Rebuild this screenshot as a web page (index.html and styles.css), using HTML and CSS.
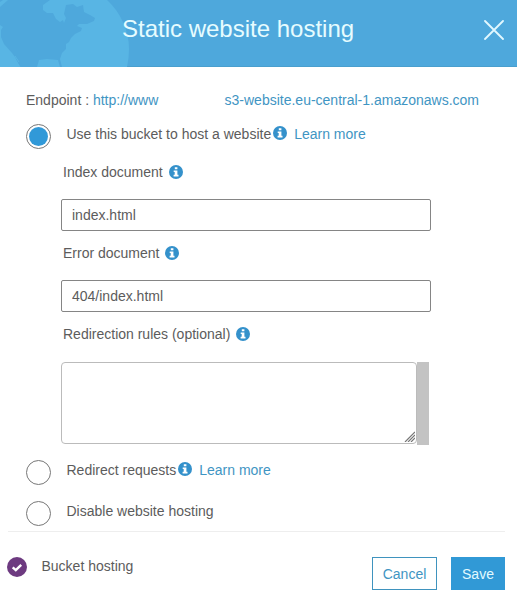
FILE: index.html
```html
<!DOCTYPE html>
<html lang="en">
<head>
<meta charset="utf-8">
<title>Static website hosting</title>
<link rel="stylesheet" href="styles.css">
</head>
<body>
<svg class="defs" aria-hidden="true">
  <symbol id="info" viewBox="0 0 14 14">
    <circle cx="7" cy="7" r="7" fill="#3491cb"/>
    <path d="M5.8 2.2h2.6v2.1H5.8zM4.7 5.4h3.7v4.4h1.1v1.6H4.6V9.8h1.1V7h-1z" fill="#fff"/>
  </symbol>
</svg>
<div class="dialog">
  <header class="header">
    <svg class="globe" viewBox="0 0 130 67" aria-hidden="true">
      <path d="M0 2L3 0H107C121 13 129 31 129 49Q129 58 127 67H0Z" fill="#58b5e4"/>
      <path d="M0 7L8 0H50L43 5 43 10 47 13 53 13 56 19 60 22 63 20 64 23 66 18 64 14 66 5 73 4 77 7 83 5 84 12 90 15 95 18 94 21 87 24 79 24 77 26 82 28 81 31 75 34 71 38 69 42 66 44 66 49 62 53 60 59 62 67H60L58 60 47 59 39 60 37 67H20L15 57 12 53 4 44 1 37 1 30 3 27 0 25Z" fill="#4ea8dc"/>
      <path d="M12 55L20 67M15 56L19 62" stroke="#58b5e4" stroke-width="1"/>
    </svg>
    <h1 class="title">Static website hosting</h1>
    <svg class="close" viewBox="0 0 20 20" role="img" aria-label="Close"><path d="M1 1L19 19M19 1L1 19"/></svg>
  </header>
  <main class="content">
    <p class="endpoint"><span>Endpoint : <a>http://www</a></span><a>s3-website.eu-central-1.amazonaws.com</a></p>
    <div class="option first">
      <span class="radio checked"></span>
      <span class="text">Use this bucket to host a website</span><svg class="info"><use href="#info"/></svg><a class="more">Learn more</a>
    </div>
    <div class="fields">
      <label class="label">Index document<svg class="info"><use href="#info"/></svg></label>
      <input class="input" type="text" value="index.html">
      <label class="label">Error document<svg class="info"><use href="#info"/></svg></label>
      <input class="input" type="text" value="404/index.html">
      <label class="label last">Redirection rules (optional)<svg class="info"><use href="#info"/></svg></label>
      <div class="rules">
        <div class="area"><svg class="grip" viewBox="0 0 11 11"><path d="M1 11L11 1M4 11L11 4M7 11L11 7"/></svg></div>
        <div class="track"></div>
      </div>
    </div>
    <div class="option">
      <span class="radio"></span>
      <span class="text">Redirect requests</span><svg class="info"><use href="#info"/></svg><a class="more">Learn more</a>
    </div>
    <div class="option">
      <span class="radio"></span>
      <span class="text">Disable website hosting</span>
    </div>
  </main>
  <footer class="footer">
    <svg class="check" viewBox="0 0 20 20"><circle cx="10" cy="10" r="10" fill="#6d3a80"/><path d="M5.7 10.3L8.8 13.2 14.2 7.8" fill="none" stroke="#fff" stroke-width="2.4"/></svg>
    <span class="status">Bucket hosting</span>
    <button class="button">Cancel</button>
    <button class="button primary">Save</button>
  </footer>
</div>
</body>
</html>
```

FILE: styles.css
```css
* { box-sizing: border-box; }
body {
  margin: 0;
  background: #fff;
  color: #5c5c5c;
  font: 14px/20px "Liberation Sans", Arial, sans-serif;
}
.defs { position: absolute; width: 0; height: 0; }
.dialog { width: 517px; height: 601px; overflow: hidden; }
.header {
  position: relative;
  display: flex;
  align-items: center;
  height: 67px;
  padding: 0 13px 0 122px;
  background: #4ea8dc;
  border-bottom: 1px solid #499fce;
}
.globe { position: absolute; left: 0; top: 0; width: 130px; height: 67px; }
.title {
  position: relative;
  flex: 1;
  margin: -8px 0 0;
  color: #e6fcff;
  font-size: 24px;
  line-height: 28px;
  font-weight: 400;
  white-space: nowrap;
}
.close {
  width: 20px;
  height: 20px;
  margin-top: -6px;
  fill: none;
  stroke: #e2f8ff;
  stroke-width: 1.8;
  stroke-linecap: round;
}
a { color: #3f95c3; }
.content {
  height: 465px;
  margin: 0 12px 0 8px;
  padding: 23px 0 0 18px;
  border-bottom: 1px solid #eee;
}
.endpoint {
  display: flex;
  justify-content: space-between;
  width: 453px;
  margin: 0;
  white-space: nowrap;
}
.option {
  display: flex;
  height: 26px;
  margin-top: 15px;
  white-space: nowrap;
}
.option.first { margin-top: 14px; }
.radio {
  width: 25px;
  height: 25px;
  margin-right: 15.5px;
  border: 1px solid #777;
  border-radius: 50%;
}
.checked { background: #3199d8; background-clip: content-box; padding: 2px; }
.option .text, .option .more { line-height: 20px; }
.info { width: 14px; height: 14px; flex: none; }
.option .info { margin: 2px 7px 0 2px; }
.fields { width: 370px; margin: 12px 0 0 35px; }
.label { display: flex; align-items: center; height: 20px; padding-left: 2px; }
.label .info { margin-left: 6px; }
.input {
  display: block;
  width: 370px;
  height: 32px;
  margin: 17px 0 12px;
  padding: 0 10px;
  border: 1px solid #858585;
  border-radius: 2px;
  background: #fff;
  color: inherit;
  font: inherit;
}
.rules { display: flex; height: 83px; margin-top: 18px; }
.area {
  display: flex;
  align-items: flex-end;
  justify-content: flex-end;
  width: 356px;
  height: 82px;
  padding: 1px;
  border: 1px solid #bbb;
  border-radius: 4px;
}
.grip { width: 11px; height: 11px; fill: none; stroke: #777; stroke-width: 1.2; }
.track { width: 12px; background: #c3c3c3; }
.footer { display: flex; padding: 25px 12px 0 7px; }
.check { width: 20px; height: 20px; }
.status { flex: 1; margin: -1px 0 0 14.5px; }
.button {
  width: 65px;
  height: 33px;
  margin: 0;
  padding: 0;
  border: 1px solid #3f93be;
  background: #fff;
  color: #3f95c3;
  font: inherit;
}
.primary {
  width: 54px;
  margin-left: 14px;
  border-color: #3199d6;
  background: #3199d6;
  color: #e2faff;
}
```
